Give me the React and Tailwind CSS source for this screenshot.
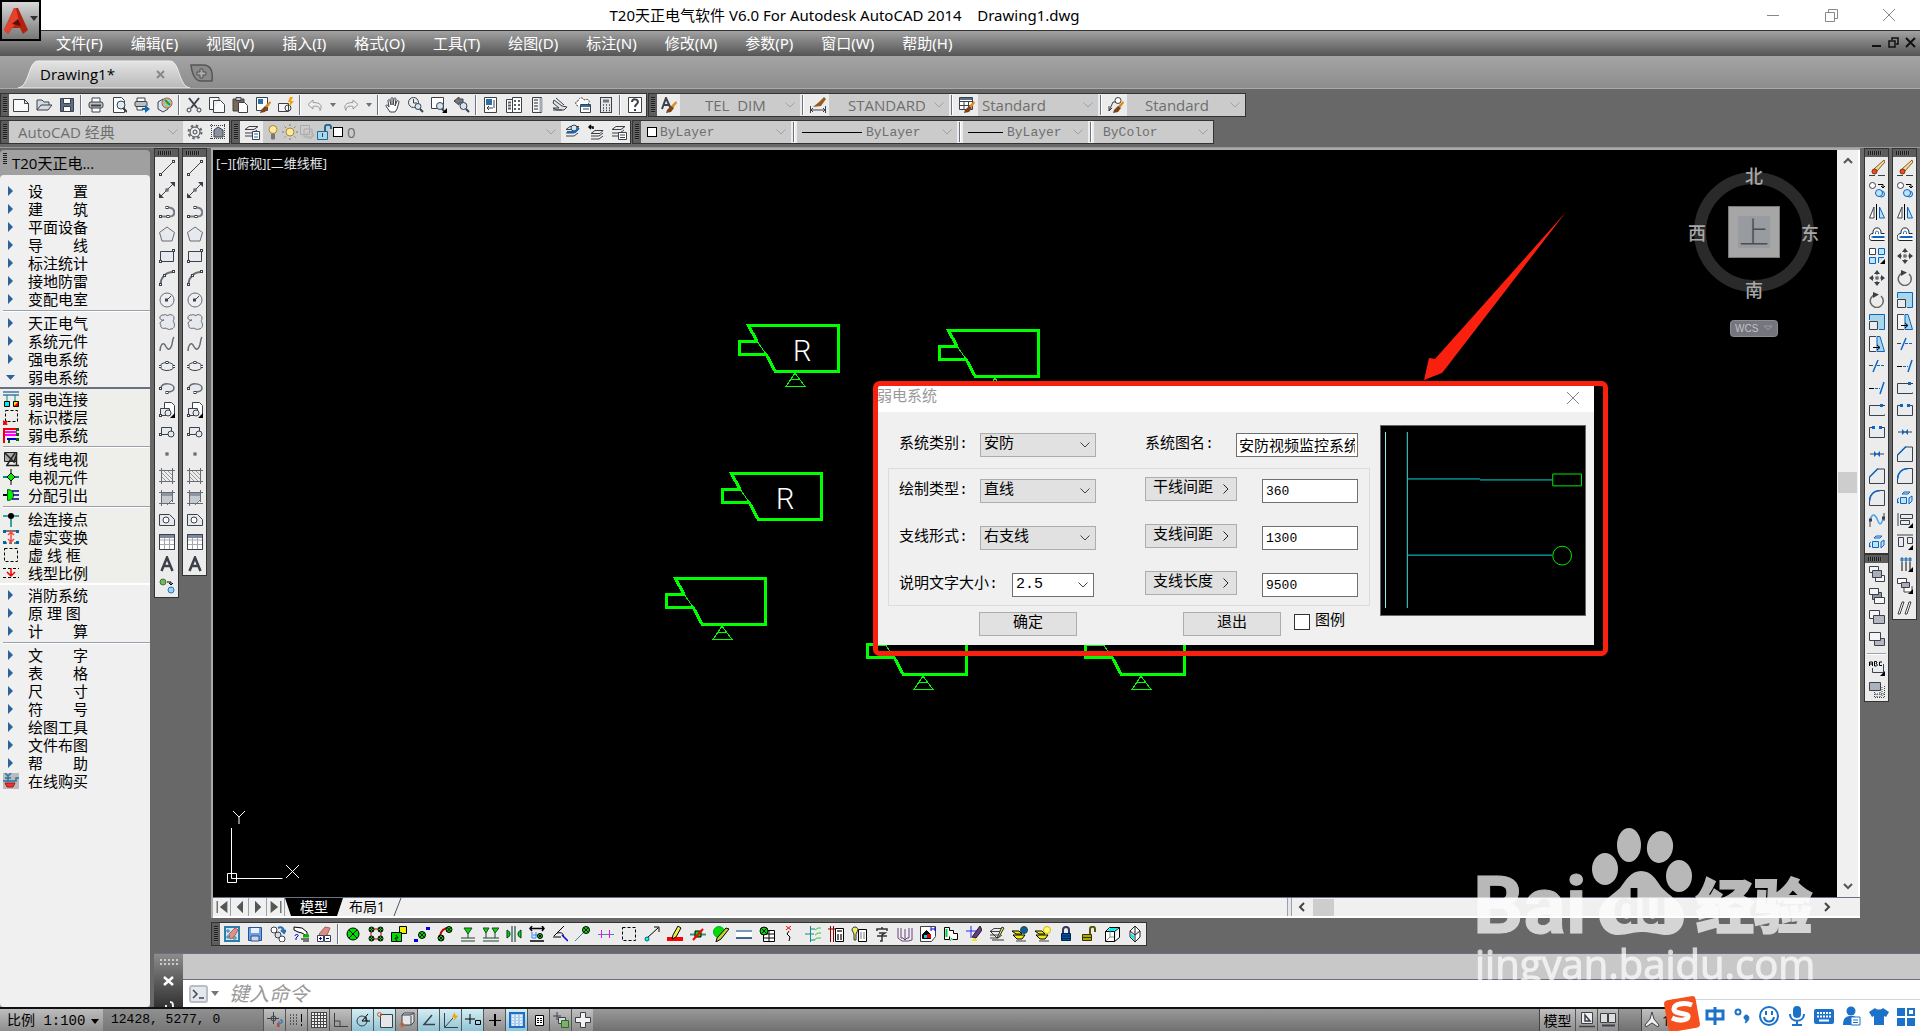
import React, { useState } from "react";

// 16x16 toolbar glyphs
const node = (x, y) => (
  <rect x={x} y={y} width="2" height="2" fill="#fff" stroke="#3c4049" key={`${x}-${y}`} />
);
const corner = <path d="M16 11v5h-5z" fill="#000" stroke="none" />;
const lamp = (x, y, r) => (
  <g stroke="#000">
    <circle cx={x} cy={y} r={r} fill="#0d0" />
    <path d={`M${x - r * 0.7} ${y - r * 0.7}l${r * 1.4} ${r * 1.4}m0 ${-r * 1.4}l${-r * 1.4} ${r * 1.4}`} />
  </g>
);
const brush = (
  <g stroke="none">
    <path d="M15 4l1 2-4 5-2-2z" fill="#e08a1a" />
    <path d="M10 9l3 2-3 4-5 1 1-3z" fill="#7b431a" />
  </g>
);
const page = <path d="M2.500.5h8l3 3v12h-11z" fill="#fff" />;
const stack = <path d="M5 2.500h9l-4 3H1zM1 9h8l4-3M1 12h8l4-3" fill="none" />;

const icons = {
  new: <path d="M.5 2.500h11l4 4v8H.5zM11.500 2.500v4h4" fill="#fafafa" />,
  open: <path d="M1 13V3h5l2 2h5v3M1 13l4-5h11l-4 5z" fill="#d5dbe2" />,
  save: (
    <>
      <path d="M1.500 1.500h13v13h-13z" fill="#5b6f8c" />
      <path d="M4.500 1.500h7v5h-7zM4.500 9.500h7v5h-7z" fill="#fff" />
    </>
  ),
  print: (
    <>
      <path d="M4 5V1h8v4M4 11v4h8v-4" fill="#fff" />
      <rect x="1" y="5" width="14" height="6" rx="2" fill="#b9bec5" />
      <path d="M3 8.500h10" strokeWidth="2" />
    </>
  ),
  preview: (
    <>
      {page}
      <circle cx="10" cy="8" r="4" fill="#d9ecf7" />
      <path d="M12 11l4 4" strokeWidth="2" />
    </>
  ),
  publish: (
    <>
      <path d="M3 5V1h8v4M3 9v4h6" fill="#fff" />
      <rect x="1" y="4.500" width="12" height="5" rx="1" fill="#b9bec5" />
      <path d="M8 11h3V8l5 4-5 4v-3H8z" fill="#1268b5" stroke="none" />
    </>
  ),
  cube3d: (
    <>
      <path d="M1 5l5-3 5 3v7l-5 3-5-3z" fill="#dce6ef" />
      <circle cx="10" cy="6" r="5" fill="#7fd0e8" stroke="#d83b1d" />
      <path d="M5 6h10M10 1v10" stroke="#e3b400" />
      <path d="M8 3l5 5" stroke="#1a9a48" strokeWidth="2" />
    </>
  ),
  cut: (
    <>
      <path d="M3 1l8 10M13 1L5 11" strokeWidth="2" />
      <circle cx="3" cy="13" r="2" />
      <circle cx="13" cy="13" r="2" />
    </>
  ),
  copyclip: <path d="M10 4V.5H.5v12H4M4.500 3.500h7l4 4v8h-11z" fill="#fafafa" />,
  paste: (
    <>
      <path d="M1 2h11v12H1z" fill="#7a6a50" />
      <path d="M4 .5h5v3H4z" fill="#ccc" />
      <path d="M6.500 5.500h6l3 3v7h-9z" fill="#fff" />
    </>
  ),
  match: (
    <>
      <path d="M1.500.5h11v13h-11z" fill="#fff" />
      <path d="M3 2h5v5H3z" fill="#2d6fa8" stroke="none" />
      {brush}
    </>
  ),
  blockedit: (
    <>
      <path d="M.5 6.500h10v8H.5z" fill="#f4f4f4" />
      <circle cx="10" cy="11" r="3" />
      <path d="M12 0l-2 5h2l-1 5 5-6h-3l2-4z" fill="#f5a10a" stroke="none" />
    </>
  ),
  undo: <path d="M6 3L1 7.500 6 12V9.500c4-1 7 0 7 4 3-5 0-8-7-8z" fill="#eee" stroke="#999" />,
  redo: <path d="M10 3l5 4.500L10 12V9.500c-4-1-7 0-7 4-3-5 0-8 7-8z" fill="#eee" stroke="#999" />,
  pan: (
    <path
      d="M5 15L1 9c0-2 2-1 3 1L3 4c0-2 2-2 2 0l1 4V2c0-2 2-2 2 0v6l1-6c0-2 2-1 2 0l-1 7 2-5c1-1 2 0 2 1l-2 7-2 3z"
      fill="#fff"
    />
  ),
  zoomrt: (
    <>
      <circle cx="5.500" cy="5.500" r="5" fill="#e8eef3" />
      <path d="M5.500 2v4H9" />
      <circle cx="10" cy="9.500" r="3" fill="#cfe6f5" />
      <path d="M12 12l3 3" strokeWidth="2" />
    </>
  ),
  zoomwin: (
    <>
      <path d="M.5.5h12v11H.5z" fill="#fff" />
      <circle cx="9" cy="9" r="3.500" fill="#cfe6f5" />
      <path d="M11 12l3 3" strokeWidth="2" />
      {corner}
    </>
  ),
  zoomprev: (
    <>
      <path d="M5 0L0 4l5 4V6h4V2H5z" fill="#777" />
      <circle cx="9.500" cy="9" r="3.500" fill="#cfe6f5" />
      <path d="M12 12l3 3" strokeWidth="2" />
    </>
  ),
  props: (
    <>
      <path d="M1.500.5h12v15h-12z" fill="#fff" />
      <path d="M3 2h6v6H3z" fill="#2d6fa8" stroke="none" />
      <path d="M11 3v8M4 11h6M4 11l2-2M4 11l2 2" />
    </>
  ),
  dcenter: (
    <>
      <path d="M.5 2.500h6v13h-6zM6.500.5h9v15h-9z" fill="#fff" />
      <path d="M2 5.500h3M2 8.500h3M2 11.500h3M8 4h2M12 4h2M8 8h2M12 8h2M8 12h2M12 12h2" stroke="#5a606b" strokeWidth="2" />
    </>
  ),
  palette: (
    <>
      <path d="M3.500.5h9v15h-9z" fill="#f4f4f4" />
      <path d="M12 1v14" stroke="#a5aab0" strokeWidth="3" />
      <path d="M5 3h4M5 6h4M5 9h4M5 12h4" stroke="#8a8f96" strokeWidth="2" />
    </>
  ),
  sheets: <path d="M2 3l8 6 5 1-3 3H5l-4-2h6L1 6zM4 1l8 7M1 13h9" fill="#dfe3e8" />,
  markup: (
    <>
      <path d="M3 9c-3-1-3-5 0-5 1-4 5-4 6-1 4-2 7 1 4 4" fill="#fff" strokeDasharray="2 1" />
      <path d="M5.500 7.500h10v8h-10z" fill="#fff" />
      <path d="M6 9h9" stroke="#2d6fa8" strokeWidth="2" />
      <path d="M8 12h6" />
    </>
  ),
  calc: (
    <>
      <rect x="2.500" y=".5" width="11" height="15" fill="#e4e6e8" />
      <path d="M5 4h6" stroke="#6f7782" strokeWidth="3" />
      <path d="M5 8h1m2 0h1m2 0h1M5 11h1m2 0h1m2 0h1M5 13.500h1m2 0h1m2 0h1" strokeWidth="1.500" />
    </>
  ),
  help: (
    <>
      <path d="M1.500.5h13v15h-13z" fill="#fff" />
      <path d="M5 5c0-4 6-3 6 0 0 2-3 2-3 5M8 12v2" strokeWidth="2" />
    </>
  ),
  textstyle: (
    <>
      <path d="M1 12L5 1l5 11M2.500 8h6" strokeWidth="2" />
      {brush}
    </>
  ),
  dimstyle: (
    <>
      <path d="M.5 9v7M15.500 9v7M1 13h14M3 11l-2 2 2 2M13 11l2 2-2 2" />
      <path d="M14 0l2 2-5 7-8 1 6-5z" fill="#9a5a22" stroke="none" />
    </>
  ),
  tablestyle: (
    <>
      <path d="M.5.5h13v12H.5zM.5 4.500h13M.5 8.500h13M5 4v8M9.500 4v8" fill="#fff" />
      <path d="M1 2h12" stroke="#5b6f8c" strokeWidth="2" />
      {brush}
    </>
  ),
  leaderstyle: (
    <>
      <circle cx="10" cy="3.500" r="3" fill="#fff" />
      <path d="M8 5H5L1 14M1 14V9M1 14l3-3" />
      {brush}
    </>
  ),
  gear: (
    <>
      <circle cx="8" cy="8" r="6.500" stroke="#666b74" strokeWidth="2" strokeDasharray="2.500 2.600" />
      <circle cx="8" cy="8" r="5" fill="#eee" />
      <circle cx="8" cy="8" r="2" />
    </>
  ),
  wssave: (
    <>
      <path d="M1.500 0v16M14.500 0v16M0 1.500h16M0 14.500h16" strokeDasharray="1 1" />
      <path d="M4 13V6l4-3 5 3v7z" fill="#8a929e" />
    </>
  ),
  layers: (
    <>
      {stack}
      <path d="M8.500 7.500h7v8h-7z" fill="#fff" />
      <path d="M10 10h4M10 13h4" stroke="#1268b5" />
    </>
  ),
  bulb: (
    <>
      <circle cx="8" cy="5.500" r="4" fill="#ffe9a0" stroke="#a98b2c" />
      <path d="M6.500 10h3v5h-3z" fill="#777" stroke="#777" />
    </>
  ),
  sun: (
    <>
      <path d="M8 0v16M0 8h16M2.500 2.500l11 11M13.500 2.500l-11 11" stroke="#8a7a4a" strokeDasharray="2 12 2 0" />
      <circle cx="8" cy="8" r="4" fill="#ffe9a0" stroke="#a98b2c" />
    </>
  ),
  vpfreeze: (
    <>
      <path d="M1.500 1.500h9v9h-9zM5 5h8v8H5z" stroke="#aaa" fill="#ccc" />
      <circle cx="11" cy="11" r="3.500" stroke="#aaa" strokeDasharray="2 1" />
    </>
  ),
  unlock: (
    <>
      <path d="M9 7V3c0-3 6-3 6 0v2" strokeWidth="2" stroke="#1f6a94" />
      <path d="M1.500 7.500h10v8h-10z" fill="#a8d8ee" stroke="#1f6a94" />
      <path d="M6.500 9v4" />
    </>
  ),
  laymake: (
    <>
      {stack}
      <circle cx="9" cy="4" r="3" fill="#d5e8f5" />
      <path d="M2 8h8l4-4" stroke="#1268b5" strokeWidth="2" />
    </>
  ),
  layprev: (
    <>
      <path d="M7 6.500h8l-3 3H3zM3 12h8l4-3M3 15h8l4-3" />
      <path d="M1 3h4v2M3 1L1 3l2 2" stroke="#000" strokeWidth="1.500" />
    </>
  ),
  laystate: (
    <>
      {stack}
      <path d="M7.500 8.500h8v7h-8z" fill="#fff" />
      <path d="M9 11h5M9 13.500h5" />
    </>
  ),
  // draw toolbar
  line: <>{<path d="M2 14L14 2" />}{node(0.5, 13.5)}{node(13.5, 0.5)}</>,
  xline: (
    <>
      <path d="M2 14L14 2" />
      <path d="M16 0v5l-5-5zM0 16v-5l5 5z" fill="#3c4049" stroke="none" />
      {node(7, 7)}
    </>
  ),
  pline: <>{<path d="M2 12.500h8c7 0 7-8 0-9H8" strokeWidth="2" stroke="#777d88" />}{node(0.5, 11.5)}{node(8, 11.5)}{node(7, 2.5)}</>,
  polygon: <path d="M8 1l7.500 5.500L13 15H3L.5 6.500z" fill="#e6e9ee" stroke="#666b74" />,
  rectangle: <>{<path d="M1.500 3.500h13v10h-13z" fill="#e6e9ee" />}{node(0.5, 12.5)}{node(13.5, 1.5)}</>,
  arc: <>{<path d="M1.500 14C2 7 7 2 14 2" strokeWidth="2" stroke="#666b74" />}{node(0.5, 13.5)}{node(4.5, 4.5)}{node(13.5, 0.5)}</>,
  circle: (
    <>
      <circle cx="8" cy="8" r="7" fill="#eceef1" stroke="#666b74" />
      <path d="M8 8l4-4" />
      {node(6.5, 7)}
    </>
  ),
  revcloud: (
    <path
      d="M5 6C-1 7 0 0 5 1c2-1 3 0 3 1 2-2 7-2 7 2 0 2-1 3-1 3 3 4 1 8-2 8-2 1-4 0-5-1-3 1-6 0-5-3-2-1-1-4 3-5z"
      fill="#e6e9ee"
      stroke="#666b74"
    />
  ),
  spline: <path d="M1 15c0-6 3-9 5-6 2 4 4 6 6 2 2-3 1-8 3-10" stroke="#666b74" strokeWidth="1.500" />,
  ellipse: <>{<ellipse cx="8" cy="8.500" rx="7" ry="4" fill="#eceef1" />}{node(0, 7.5)}{node(7, 3.5)}{node(14, 7.5)}</>,
  ellarc: <>{<path d="M2 8C2 2 15 3 15 8c0 3-4 4-7 4" fill="#e6e9ee" stroke="#666b74" strokeWidth="1.500" />}{node(0.5, 7.5)}{node(7, 11.5)}</>,
  insert: (
    <>
      <path d="M5.500 7V.5h7l3 3v9" fill="#fff" />
      <path d="M1.500 6.500h9v7h-9z" fill="#e6e9ee" />
      <circle cx="9" cy="11" r="3" fill="#e6e9ee" />
      {corner}
      {node(0.5, 12.5)}
    </>
  ),
  block: (
    <>
      <path d="M2.500 3.500h10v7h-10z" fill="#e6e9ee" />
      <circle cx="12" cy="10" r="3" fill="#e6e9ee" />
      {node(0.5, 9.5)}
    </>
  ),
  point: node(7, 7),
  hatch: (
    <>
      <path d="M0 2.500h16M0 13.500h16M2.500 0v16M13.500 0v16" stroke="#666b74" />
      <path d="M3 5l8 8M3 9l4 4M5 3l8 8M9 3l4 4" stroke="#999" />
    </>
  ),
  gradient: (
    <>
      <path d="M3 3h10v6l-4 4H3z" fill="#c5cad1" stroke="none" />
      <path d="M3 3h10v3H3z" fill="#8f96a1" stroke="none" />
      <path d="M0 2.500h16M0 13.500h16M2.500 0v16M13.500 0v12M8 15l6-6" stroke="#666b74" />
    </>
  ),
  region: (
    <>
      <path d="M.5 2.500h10l5 5v6H.5z" fill="#e6e9ee" />
      <circle cx="7" cy="8" r="3" fill="#fff" />
    </>
  ),
  table: (
    <>
      <path d="M.5.5h15v15H.5z" fill="#fff" />
      <path d="M1 6h14M1 10.500h14M5.500 4v11M10.500 4v11" stroke="#a5aab2" />
      <path d="M1 2.500h14" stroke="#7d88a0" strokeWidth="3" />
      <path d="M.5.5h15v15H.5z" />
    </>
  ),
  mtext: <path d="M2.500 15L8 1.500 13.500 15M4.500 10h7" strokeWidth="2.500" />,
  addsel: (
    <>
      <circle cx="4" cy="4" r="3" fill="#7fb069" stroke="#3a7a2a" />
      <circle cx="12" cy="12" r="3" fill="#9fd0f5" stroke="#1f77c0" />
      <path d="M8 4h4v3M10 5l2 2 2-2" stroke="#000" />
    </>
  ),
  // modify toolbar
  erase: (
    <>
      <path d="M15 0l1 2-8 9-3-2z" fill="#f0d9a0" stroke="#8a5a1a" />
      <circle cx="5.500" cy="11.500" r="2.500" fill="#e2521f" stroke="#8a2a0a" />
      <path d="M0 15.500h6M9 15.500h7" />
    </>
  ),
  copy: (
    <>
      <circle cx="3.500" cy="3.500" r="3" fill="#fff" />
      <circle cx="12.500" cy="12" r="3" fill="#bfe3f8" stroke="#0a66c2" />
      <circle cx="10" cy="11" r="3.500" fill="#bfe3f8" stroke="#0a66c2" />
      <path d="M9 2.500h5v3M12 4l2 2 2-2" stroke="#000" />
    </>
  ),
  mirror: (
    <>
      <path d="M7.500 0v16" stroke="#000" />
      <path d="M5 3v11H.5z" fill="#fff" />
      <path d="M10.500 3v11h5z" fill="#bfe3f8" stroke="#0a66c2" />
    </>
  ),
  offset: (
    <>
      <path d="M15.500 14.500H3c-4 0-4-7 1-7C3 0 13 0 12 7.500h3.500" fill="#fff" stroke="#222" />
      <path d="M15.500 10.500H4c-2 0-2 1 0 1h11.500M6.500 8C6 4 10 4 9.500 8" stroke="#0a66c2" />
    </>
  ),
  array: (
    <>
      <path d="M.5.5h6v6h-6z" fill="#fff" />
      <path d="M9.500.5h6v6h-6zM.5 9.500h6v6h-6zM9.500 15V9.500H15" fill="#bfe3f8" stroke="#0a66c2" />
      {corner}
    </>
  ),
  move: (
    <>
      <path d="M8 0l3 4H5zM8 16l3-4H5zM0 8l4-3v6zM16 8l-4-3v6z" fill="#3c4049" stroke="none" />
      <path d="M8 3v2M8 11v2M3 8h2M11 8h2" />
      {node(7, 7)}
    </>
  ),
  rotate: (
    <>
      <path d="M7 2.500A6.500 6.500 0 1 0 12 4" strokeWidth="1.500" stroke="#666" />
      <path d="M4 0l6 2.500L4 6z" fill="#3c4049" stroke="none" />
    </>
  ),
  scale: (
    <>
      <path d="M.5 6V.5h15v15H10" fill="#a9d7ea" stroke="#0a66c2" />
      <path d="M.5 7.500h8v8h-8z" fill="#e9ecef" />
    </>
  ),
  stretch: (
    <>
      <path d="M7 .5H.5v15H7" fill="#f4f4f4" />
      <path d="M8 .5h3l4.500 15H8z" fill="#a9d7ea" stroke="#0a66c2" />
      <path d="M4 11.500h6M8 9l3 2.500L8 14" stroke="#000" />
    </>
  ),
  trim: (
    <>
      <path d="M9 2L4 14" stroke="#0a66c2" strokeWidth="1.500" />
      <path d="M0 7.500h4" />
      <path d="M8 7.500h8" stroke="#0a66c2" strokeDasharray="3 1" />
    </>
  ),
  extend: (
    <>
      <path d="M15 2l-4 12" stroke="#0a66c2" strokeWidth="1.500" />
      <path d="M0 8.500h5" stroke="#000" />
      <path d="M6 8.500h5" stroke="#0a66c2" strokeDasharray="3 1" />
    </>
  ),
  breakpt: (
    <>
      <path d="M16 3.500H.5v10h15v-1" fill="#e9ecef" />
      <path d="M11 2h3v3h-3z" fill="#0a66c2" stroke="none" />
    </>
  ),
  break: (
    <>
      <path d="M3 3.500H.5v10h15v-10H13" fill="#e9ecef" />
      <path d="M3 2h3v3H3zM10 2h3v3h-3z" fill="#0a66c2" stroke="none" />
    </>
  ),
  join: (
    <>
      <path d="M1 8h14" />
      <path d="M5 5l3 3-3 3zM11 5L8 8l3 3z" fill="#0a66c2" stroke="none" />
    </>
  ),
  chamfer: (
    <>
      <path d="M1 9l8-8h6.500v14.500H.5V9" fill="#e9ecef" />
      <path d="M.5 9L9 .5" stroke="#0a66c2" strokeWidth="1.500" />
    </>
  ),
  fillet: (
    <>
      <path d="M.5 12C.5 5 4 .5 12 .5h3.500v15H.5z" fill="#e9ecef" />
      <path d="M.5 11C1 5 4 1 11 .5" stroke="#0a66c2" strokeWidth="1.500" />
    </>
  ),
  blend: (
    <>
      <path d="M1 8C4-1 7 4 9 9s4 3 5-3" stroke="#4aa3f0" strokeWidth="1.500" />
      <path d="M1 15V8M15 1v8" />
      {node(0.5, 7)}
      {node(13.5, 5)}
    </>
  ),
  explode: (
    <g stroke="#0a66c2">
      <path d="M3.500 7.500h6v6h-6z" fill="#bfe3f8" />
      <path d="M5 4l2-2h6l-2 2zM12 8l3-2v5l-3 3zM2 8L.5 9v4L2 12" fill="#bfe3f8" />
    </g>
  ),
  alignleft: <>{<path d="M1 1v13M3.500 2.500h12v4h-12zM3.500 8.500h9v4h-9z" fill="#e9ecef" />}{corner}</>,
  aligntop: <>{<path d="M0 1h16M1.500 3.500h5v9h-5zM10.500 3.500h5v6h-5z" fill="#e9ecef" />}{corner}</>,
  counters: (
    <>
      <path d="M5 6v9M9 6v9M13 6v9" strokeWidth="1.500" stroke="#555" />
      <path d="M4 2h2v3H4zM8 2h2v3H8zM12 2h2v3h-2z" fill="#5f92c4" stroke="#2d6fa8" />
      {corner}
    </>
  ),
  groups: <>{<path d="M.5.5h9v5h-9zM7 9v5h8V8" fill="#fff" />}<path d="M4.500 4.500h8v5h-8z" fill="#aab" />{corner}</>,
  slashes: <path d="M5 2h2L3 14H1zM12 2h2l-4 12H8z" fill="#fff" />,
  front: <>{<path d="M.5.5h9v6h-9zM6.500 9.500h9v6h-9z" fill="#f4f5f8" />}<path d="M3.500 4.500h9v7h-9z" fill="#a9adb8" /></>,
  back: <>{<path d="M3.500 4.500h9v7h-9z" fill="#8e949f" />}<path d="M.5.5h9v6h-9zM5.500 9.500h10v6h-10z" fill="#f4f5f8" /></>,
  above: <>{<path d="M.5.5h10v8H.5z" fill="#f4f5f8" />}<path d="M4.500 5.500h11v8h-11z" fill="#b5b8c0" /></>,
  under: <>{<path d="M5.500 6.500h10v7h-10z" fill="#b5b8c0" />}<path d="M.5.5h11v8H.5z" fill="#f4f5f8" /></>,
  abc: (
    <>
      <path d="M3.500 8v4.500h11V4" fill="#e9ecef" />
      <path d="M.5 6V2h3v4M1 4h2M5.500 6V1.500h2L8 3l-1 .5L8.500 5l-1 1zM13 2h-2.500v3.500H13" stroke="#000" />
      {corner}
    </>
  ),
  hatchback: <>{<path d="M.5.5h11v8H.5z" fill="#a9b2bd" />}<path d="M5.500 10v5.500h10V4M8 15v-3M11 15V9M6 12h9M13 5v10" strokeDasharray="1 1" /></>,
  // bottom electrical toolbar
  panelset: (
    <>
      <path d="M1 1h14v14H1z" fill="#cfe8f5" stroke="#2d7fa8" strokeWidth="2" />
      <path d="M3 4h2v2H3zM3 10h2v2H3zM9 11h3v2H9z" stroke="#2d7fa8" />
      <path d="M5 8l6-6 3 2-4 7-4 2z" fill="#e0908a" stroke="#a8605a" />
    </>
  ),
  disk: (
    <>
      <path d="M1.500 1.500h13v13h-13z" fill="#6f9fe0" stroke="#2a4f9a" />
      <path d="M4 2h8v5H4z" fill="#e6f0ff" stroke="none" />
      <path d="M4 10h8v5H4z" fill="#d0d8e0" stroke="#2a4f9a" />
    </>
  ),
  swap: (
    <>
      <circle cx="4" cy="4" r="3" fill="#fff" />
      <circle cx="8" cy="9" r="3" fill="#ddd" />
      <circle cx="12" cy="13" r="3" fill="#fff" />
      <path d="M8 2c4-2 6 1 6 4M11 4l3 3 2-3" stroke="#2a6fb0" strokeWidth="2" />
    </>
  ),
  handask: (
    <>
      <path d="M1 1l8 1 5 4v4l-5-3-4-1-4-2z" fill="#fff" stroke="#000" />
      <path d="M2 10c0-2 4-2 3 0l-2 2v2" stroke="#00c" />
      <path d="M10 10h6" stroke="#0b0" strokeWidth="3" />
      <path d="M8 13h8M10 15h6" stroke="#000" />
    </>
  ),
  eraser2: (
    <>
      <path d="M3 8l6-7 5 1-3 7-6 2z" fill="#d98f86" stroke="#a8605a" />
      <path d="M1.500 9.500h6v6h-6zM8.500 9.500h6v6h-6z" fill="#fff" />
      <path d="M3 12.500h3M4.500 11v3M10 12.500h3" stroke="#00c" />
    </>
  ),
  lamp1: lamp(8, 8, 6),
  lamp4: <>{<path d="M3 3h10v10H3z" stroke="#c00" />}{lamp(3.5, 3.5, 2.5)}{lamp(12.5, 3.5, 2.5)}{lamp(3.5, 12.5, 2.5)}{lamp(12.5, 12.5, 2.5)}</>,
  swaplamp: <><path d="M8.500.5h7v7h-7z" fill="#ee0" stroke="#000" /><path d="M.5 6.500h10v9H.5z" fill="#0d0" stroke="#000" /><path d="M5 9l2 3H4l2 3" stroke="#000" /></>,
  lampline: <>{lamp(8, 9, 3.5)}<path d="M0 13h4v3H0zM12 1h4v3h-4z" fill="#00d" stroke="none" /></>,
  lamparc: <><path d="M3 10c1-6 5-8 9-8" stroke="#c00" strokeWidth="2" />{lamp(4, 12, 3)}{lamp(12, 3.5, 3)}</>,
  wall1: <path d="M4 2h8L8 8zM8 8v4M1 12h14M1 15h14" fill="#0d0" stroke="#243" />,
  wall2: <path d="M0 2h6L3 7zM9 2h7l-4 5zM3 7v5M12 7v5M0 12h16M0 15h16" fill="#0d0" stroke="#243" />,
  doublewall: <path d="M6 0v16M9 0v16M1 4c4 2 4 6 0 8zM15 4c-4 2-4 6 0 8z" fill="#0d0" stroke="#032" />,
  equip: (
    <>
      <path d="M1 2.500h14M3 0L1 2.500 3 5M13 0l2 2.500L13 5M1 15h14" stroke="#000" strokeWidth="1.500" />
      <path d="M3 6v6h4V6M4 9h6" stroke="#28f" />
      {lamp(11, 10, 2.5)}
    </>
  ),
  switch: (
    <>
      <path d="M2 10L12 0M5 7c5-1 7 1 6 3M1 11h8" stroke="#000" />
      <path d="M10 9l6 6" stroke="#00d" strokeWidth="1.500" />
    </>
  ),
  lampstick: <><path d="M0 15l8-8" stroke="#488" />{lamp(11, 4, 3.5)}</>,
  wire: <><path d="M0 8.500h16" stroke="#48a" /><path d="M3.500 4v8M11.500 4v8" stroke="#f0f" /></>,
  dashbox: <path d="M1.500 1.500h13v13h-13z" strokeDasharray="3 2" stroke="#000" />,
  wirepoint: <><path d="M3 12L14 2M10 1h5v5" stroke="#000" /><circle cx="3" cy="13" r="2" fill="#0ff" stroke="#066" /></>,
  pencilred: (
    <>
      <path d="M0 11h16v4H0z" fill="#f00" stroke="none" />
      <path d="M11 0l3 2-5 9-4 2 1-4z" fill="#ee4" stroke="#000" />
    </>
  ),
  cutwire: <><path d="M0 8.500h16" stroke="#488" strokeWidth="2" /><path d="M5 5h6v6H5z" fill="#0d0" stroke="#000" /><path d="M3 14L13 3" stroke="#f00" strokeWidth="2" /></>,
  lampedit: <><circle cx="6" cy="6" r="5.500" fill="#0d0" stroke="#0a4" /><path d="M13 2l3 1-8 10-5 3 1-4z" fill="#cc3" stroke="#000" /></>,
  bars: <><path d="M0 8.500h16" stroke="#fff" strokeWidth="5" /><path d="M0 5h16" stroke="#79b" strokeWidth="2" /><path d="M0 12h16" stroke="#468" strokeWidth="2" /></>,
  lamptable: <><path d="M4.500 4.500h11v11h-11zM4 8h12M4 12h12M10 5v10" fill="#fff" stroke="#000" />{lamp(5, 5, 4)}</>,
  spark: <><path d="M4 0l5 4M9 0L4 4" stroke="#f00" /><path d="M7 5L5 8l3 3-1 4" stroke="#000" /></>,
  branches: <><path d="M5.500 0v16M0 8h9M5 3h5M5 14h5" stroke="#188" /><path d="M10 4l3-2h3M10 9l3-2h3M9 14l3-2h4" stroke="#3c3" /></>,
  busbar: <><path d="M0 3h8M2.500 0v16M5.500 0v16" stroke="#800" /><path d="M7.500 2.500h8v13h-8z" fill="#fff" stroke="#000" /><path d="M9 5h5M10 8v6M13 8v6" stroke="#333" strokeWidth="1.500" /></>,
  bulbpanel: <><path d="M1 4c0-4 6-4 6 0L5 8v6H3V8z" fill="#ee6" stroke="#333" /><path d="M7.500 3.500h8v12h-8z" fill="#fff" stroke="#000" /><path d="M10 6v7M13 6v7" stroke="#777" /></>,
  word: <path d="M3 5V3h10v2M8 1v2M5 7h6L8 9v6H6M3 10h10" stroke="#333" strokeWidth="1.500" />,
  book: <path d="M1 2v10l4 3h6l4-1V2M4 2v10h2l2 2 2-2h2V2M8 3v10" fill="#eee" stroke="#647" />,
  shapes: (
    <>
      <path d="M.5.5h15v10l-4 5H.5z" fill="#fff" />
      <path d="M2.500 8.500l4-4 4 4v4h-8z" fill="#000" stroke="#000" />
      <path d="M7 8h4v4H7z" fill="#d00" stroke="none" />
      <path d="M4 9h3v3H4z" fill="#0cf" stroke="none" />
      <path d="M11 1v4M15 1v4M11 3h4" stroke="#00d" />
    </>
  ),
  outline: <><path d="M1.500 1.500h5v3h4v3h4v6h-5M1.500 1.500v12h5v-3" fill="#fff" stroke="#000" /><path d="M3.500 3v8" stroke="#0c3" strokeWidth="2" /><path d="M7 15l2-3" stroke="#0c3" /></>,
  crosspen: <><path d="M0 5h12M5 0v12" stroke="#22f" /><path d="M14 0l2 4-6 8-4-1z" fill="#6a3a8a" stroke="#222" /><path d="M6 14h5" stroke="#ee0" strokeWidth="2" /></>,
  layerpen: <><g>{stack}</g><path d="M1 5l7 7M3 14h12" stroke="#333" /><path d="M13 1l2 1-5 9-2 1z" fill="#ee4" stroke="#333" /></>,
  layeroff: <><path d="M0 5h7l3 3H4zM1 9h12l-3 4H5z" fill="#ee0" stroke="#000" /><circle cx="12" cy="4" r="3.500" fill="#069" /><path d="M4 15h10" /></>,
  layeron: <><path d="M0 5h7l3 3H4zM1 9h12l-3 4H5z" fill="#ee0" stroke="#000" /><circle cx="12" cy="4" r="3.500" fill="#ff6" stroke="#cb0" /><path d="M4 15h10" /></>,
  lock: <><path d="M5 7V4c0-4 6-4 6 0v3" stroke="#336" strokeWidth="2" /><path d="M3.500 7.500h9v7h-9z" fill="#05a" stroke="#024" /><path d="M4 10h8M4 12.500h8" stroke="#024" /></>,
  lockopen: <><path d="M9 8V3c0-3 5-3 5 0v3" stroke="#550" strokeWidth="2" /><path d="M1.500 8.500h9v6h-9z" fill="#aa0" stroke="#330" /><path d="M2 11.500h8" stroke="#330" /></>,
  box3d: <><path d="M1.500 5.500h9v10h-9zM1.500 5.500l4-4h10l-5 4M15.500 1.500v10l-5 4" fill="#fff" stroke="#000" /><path d="M3 5l3-3h8l-4 3z" fill="#0ee" stroke="none" /><path d="M2 15l4-4V5M6 11h4" stroke="#888" /></>,
  diamond: <><path d="M8 0l5 5v6l-5 5-5-5V5zM8 0v16M3 5l5 4 5-4" fill="#fff" stroke="#222" /><path d="M4 7l3 3v4l-3-3z" fill="#0ee" stroke="none" /></>,
  // status bar
  infer: <><path d="M0 6.500h12M6.500 0v12" /><circle cx="6.500" cy="6.500" r="2.500" /><path d="M13 8h2v3h-2M12 9v6" stroke="#1268b5" /><path d="M11 15v-4" stroke="#d83b1d" strokeWidth="2" /></>,
  snap: <><path d="M1 3h9M1 6h9M1 9h9M1 12h9" strokeDasharray="1 2" stroke="#000" /><path d="M12.500 2v8M12.500 12v2" stroke="#000" /></>,
  grid: (
    <>
      <path d="M.5.5h15v15H.5z" fill="#eee" />
      <path d="M.5.5h15v15H.5zM3.500 0v16M6.500 0v16M9.500 0v16M12.500 0v16M0 3.500h16M0 6.500h16M0 9.500h16M0 12.500h16" stroke="#444" />
    </>
  ),
  ortho: <path d="M1.500 1v13.500H15M2 9h5v5" />,
  polar: <><circle cx="7" cy="9" r="5" /><path d="M7 9h8M7 9l6-7M11 5v4" stroke="#000" /></>,
  osnap: <><path d="M3.500 2.500h12v13h-12z" fill="#e4e6e8" /><circle cx="2.500" cy="2.500" r="2" stroke="#e8581a" /></>,
  osnap3d: <><path d="M3 3l2-2h10v9l-3 3H3zM12 4v9M3 3h9l3-2" fill="#e4e6e8" /><circle cx="3" cy="13" r="2" stroke="#e8581a" /></>,
  otrack: <path d="M11 3L3 12.500h11" strokeWidth="1.500" />,
  ducs: <><path d="M1.500 1v14.500H15M2 15l8-9" /><path d="M12 0L9 5l3 1-2 4 5-6-3-1z" fill="#f5a10a" stroke="none" /></>,
  dyn: <path d="M0 7h10M5 2v10M10.500 8.500h5v4h-5z" stroke="#000" />,
  lwt: <><path d="M8 2v12" stroke="#000" strokeWidth="2" /><path d="M2 8.500h12" stroke="#000" /></>,
  tpy: <><path d="M1 1h14v14H1z" fill="#a8cdf0" stroke="#1f6fc0" strokeWidth="2" /><path d="M3 4h11M3 7h11M3 10h11M3 13h11" stroke="#e3f0fb" strokeWidth="2" strokeDasharray="2 2" /></>,
  qp: <><path d="M4.500 3.500h8v10h-8z" fill="#fff" stroke="#000" /><path d="M6 6.500h5M6 8.500h5M6 10.500h5" stroke="#000" strokeDasharray="2 1" /></>,
  sc: <><path d="M0 4h8M4 0v8" /><path d="M5.500 5.500h7v6h-7z" fill="#d5dbe2" /><path d="M8.500 8.500h7v7h-7z" fill="#7fb069" stroke="#2d6b2a" /></>,
  annomon: <path d="M5.500.5h5v5h5v5h-5v5h-5v-5h-5v-5h5z" fill="#f2f2f2" />,
  modelpage: <><path d="M2.500.5h11v11h-11z" fill="#eee" /><path d="M6 3v6h5zM0 14.500h16" strokeWidth="1.500" /></>,
  quickview: <><path d="M.5 1.500h7v9h-7zM8.500 1.500h7v9h-7z" fill="#ddd" /><path d="M2 13.500h13" strokeWidth="2" /></>,
  annoscale: <path d="M8 0l2 7 5 6-1 2-6-4-6 4-1-2 5-6z" fill="#eee" />,
};

const Icon = ({ name }) => (
  <svg width="16" height="16" viewBox="0 0 16 16" fill="none" stroke="#3c4049" className="shrink-0">
    {icons[name]}
  </svg>
);

const Chevron = ({ className }) => (
  <svg width="10" height="6" viewBox="0 0 10 6" fill="none" className={className}>
    <path d="M.5.5L5 5 9.500.5" stroke="currentColor" />
  </svg>
);

// "|" separator, ">" small drop arrow, anything else an icon button
const ToolItems = ({ items }) =>
  items.map((item, i) => {
    if (item === "|") return <Sep key={i} />;
    if (item === ">")
      return (
        <span key={i} className="flex w-[13px] justify-center text-gray-500">
          <svg width="6" height="4"><path d="M0 0h6L3 4z" fill="currentColor" /></svg>
        </span>
      );
    return (
      <button key={i} aria-label={item} className="flex h-[22px] w-[23px] items-center justify-center">
        <Icon name={item} />
      </button>
    );
  });

const Grip = () => (
  <span className="flex h-full w-[8px] shrink-0 items-center justify-center bg-[#5c5c5c]">
    <span className="h-4 w-1 bg-[repeating-linear-gradient(#1c1c1c_0_1px,#6c6c6c_1px_2px)]" />
  </span>
);

const Toolbar = ({ children }) => (
  <div className="flex h-6 items-center border border-[#333] bg-[#ececec]">
    <Grip />
    {children}
  </div>
);

const Sep = () => (
  <span className="mx-[2px] h-5 w-[2px] border-l border-r border-l-gray-500 border-r-white" />
);

const BarSelect = ({ label, value, width, pad, lead, mono }) => (
  <div className={`relative flex h-[22px] items-center bg-[#cbcbcb] text-[#6e6e6e] ${width}`}>
    {lead}
    <select
      aria-label={label}
      className={`h-full w-full min-w-0 appearance-none pr-6 ${pad} ${
        mono ? "pt-[2px] font-['Liberation_Mono',monospace] text-[13px]" : "text-[15px]"
      }`}
    >
      <option>{value}</option>
    </select>
    <Chevron className="pointer-events-none absolute right-[5px] text-gray-400" />
  </div>
);

const VToolbar = ({ items }) => (
  <div className="w-[25px] border border-[#333] bg-[#ececec]">
    <div className="flex h-2 items-center bg-[#5c5c5c] px-[3px]">
      <span className="h-1 w-3.5 bg-[repeating-linear-gradient(90deg,#1c1c1c_0_1px,#6c6c6c_1px_2px)]" />
    </div>
    {items.map((item, i) =>
      item === "|" ? (
        <div key={i} className="mx-[2px] my-[2px] h-[2px] border-t border-gray-400 bg-white" />
      ) : (
        <button key={i} aria-label={item} className="flex h-[22px] w-full items-center justify-center">
          <Icon name={item} />
        </button>
      )
    )}
  </div>
);

const drawTools = [
  "line", "xline", "pline", "polygon", "rectangle", "arc", "circle", "revcloud", "spline", "ellipse",
  "ellarc", "insert", "block", "point", "hatch", "gradient", "region", "table", "mtext",
];
const modifyTools = [
  "erase", "copy", "mirror", "offset", "array", "move", "rotate", "scale", "stretch", "trim", "extend",
  "breakpt", "break", "join", "chamfer", "fillet", "blend", "explode",
];
const modifyTools2 = [
  "erase", "copy", "mirror", "offset", "move", "rotate", "scale", "stretch", "trim", "extend", "breakpt",
  "break", "join", "chamfer", "fillet", "explode", "alignleft", "aligntop", "counters", "groups", "slashes",
];

const menus = [
  "文件(F)", "编辑(E)", "视图(V)", "插入(I)", "格式(O)", "工具(T)", "绘图(D)", "标注(N)", "修改(M)",
  "参数(P)", "窗口(W)", "帮助(H)",
];

/* sidebar tree icons */
const sideIcons = {
  link: (
    <>
      <path d="M0 1h16M0 4h16" stroke="#47a" strokeWidth="1.500" />
      <path d="M4 4v6M12 4v6" stroke="#088" />
      <path d="M1.500 10.500h5v5h-5z" fill="#0ee" stroke="#000" />
      <path d="M10.500 10.500h5v5h-5z" fill="#fe0" stroke="#000" />
      <path d="M11 15l4-4v4z" fill="#e00" stroke="none" />
    </>
  ),
  floor: <><path d="M2.500 1.500h12v11h-12z" stroke="#000" strokeDasharray="3 2" /><path d="M0 12l4 4M4 12l-4 4" stroke="#e00" strokeWidth="2" /></>,
  system: <><path d="M1 1v15M1 2h13" stroke="#e00" strokeWidth="2" /><path d="M2 5h12M2 8h12" stroke="#f0f" strokeWidth="2" /><path d="M4 12h10" stroke="#00c" strokeWidth="2" /><path d="M13 1h3v3h-3zM13 6h3v3h-3zM13 11h3v3h-3zM5 13h2v3H5z" fill="#060" stroke="none" /></>,
  tv: <><path d="M1.500 1.500h12v9h-12z" fill="#aaa" stroke="#222" /><path d="M2 2l9 9 3-9M12 2L4 14M3 14.500h13M13.500 1v14" stroke="#222" strokeWidth="1.500" /></>,
  tvpart: <><path d="M0 8h16" stroke="#088" strokeWidth="2" /><path d="M8 0v16" stroke="#000" /><path d="M8 4l4 4-4 4-4-4z" fill="#0e0" stroke="#000" /></>,
  split: <><path d="M0 8h4" stroke="#000" strokeWidth="2" /><path d="M4.500 2.500c8 0 8 11 0 11z" fill="#0e0" stroke="#060" /><path d="M9 4h7M10 8h6M9 12h7" stroke="#008" strokeWidth="1.500" /></>,
  joint: <><path d="M0 5h16M8 5v11" stroke="#088" strokeWidth="1.500" /><circle cx="8" cy="5" r="3" fill="#000" stroke="none" /></>,
  convert: <><path d="M1 2h14" stroke="#000" /><path d="M1 14h14" stroke="#000" strokeDasharray="3 2" /><path d="M8 4v8M5 6l3-3 3 3M5 10l3 3 3-3" stroke="#f44" strokeWidth="1.500" /><path d="M0 1h3v3H0zM13 1h3v3h-3zM0 12h3v3H0zM13 12h3v3h-3z" fill="#06a" stroke="none" /></>,
  dashed: <path d="M1.500 1.500h13v13h-13z" stroke="#000" strokeDasharray="3 2" />,
  ratio: <><path d="M0 3.500h16M0 12.500h16" stroke="#000" strokeDasharray="3 2" /><path d="M8 3v8M4 7l4 4 4-4" stroke="#e00" strokeWidth="1.500" /></>,
  cart: <><path d="M0 0h16v16H0z" fill="#bbb" stroke="none" /><path d="M2 0l3 3 3-3M5 3v6M2 5h6M0 8h13V5h3" stroke="#27a" strokeWidth="1.500" /><path d="M2 10h10l-2 4H4z" fill="#e33" stroke="#a11" /></>,
};

const tree = [
  ["设　　置", "建　　筑", "平面设备", "导　　线", "标注统计", "接地防雷", "变配电室"],
  ["天正电气", "系统元件", "强电系统", "弱电系统"],
];
const subTree = [
  [["link", "弱电连接"], ["floor", "标识楼层"], ["system", "弱电系统"]],
  [["tv", "有线电视"], ["tvpart", "电视元件"], ["split", "分配引出"]],
  [["joint", "绘连接点"], ["convert", "虚实变换"], ["dashed", "虚 线 框"], ["ratio", "线型比例"]],
];
const treeEnd = [
  ["消防系统", "原 理 图", "计　　算"],
  ["文　　字", "表　　格", "尺　　寸", "符　　号", "绘图工具", "文件布图", "帮　　助", "在线购买"],
];

const TreeItem = ({ label, open, icon }) => (
  <li className="h-[18px]">
    <button className="flex h-[18px] w-full items-center pl-[3px] text-[15px] leading-[18px]">
      <span className="flex w-[25px]">
        <svg width="16" height="16" viewBox="0 0 16 16" fill="none" className="text-[#2a6299]">
          {icon ? sideIcons[icon] : <path d={open ? "M3 6h9l-4.500 5z" : "M5 3v10l5-5z"} fill="currentColor" />}
        </svg>
      </span>
      {label}
    </button>
  </li>
);

const TreeGroups = ({ groups, render }) =>
  groups.map((g, i) => (
    <React.Fragment key={i}>
      {i > 0 && <li className="my-[2px] ml-[3px] h-[2px] border-t border-gray-400 bg-white" />}
      {g.map(render)}
    </React.Fragment>
  ));

const Sidebar = () => (
  <aside className="mt-[2px] flex w-[150px] shrink-0 flex-col rounded-t bg-[#a0a0a0]">
    <div className="flex h-[25px] items-center">
      <span className="mt-[3px] ml-[3px] h-3 w-1 self-start bg-[repeating-linear-gradient(#1c1c1c_0_1px,#a0a0a0_1px_2px)]" />
      <h2 className="pl-[5px] text-[15px] leading-6">T20天正电...</h2>
    </div>
    <nav className="min-h-0 flex-1 overflow-hidden rounded bg-[#f0f0f0] pt-[7px]">
      <ul className="pb-px">
        <TreeGroups groups={tree} render={(t) => <TreeItem key={t} label={t} open={t === "弱电系统"} />} />
      </ul>
      <ul className="border-t-2 border-b-2 border-t-gray-500 border-b-white bg-[#eeeeea] py-[1px]">
        <TreeGroups groups={subTree} render={([icon, t]) => <TreeItem key={t} label={t} icon={icon} />} />
      </ul>
      <ul className="pt-px">
        <TreeGroups
          groups={treeEnd}
          render={(t) => <TreeItem key={t} label={t} icon={t === "在线购买" ? "cart" : null} />}
        />
      </ul>
    </nav>
  </aside>
);

const Camera = ({ x, y, stand = true, letter }) => (
  <g transform={`translate(${x} ${y})`} stroke="#0f0" fill="none">
    <g shapeRendering="crispEdges">
      <path d="M10 17L1 1h90v46H28l-9-17H-8V17h18" strokeWidth="3" />
      <path d="M10 17l9 13" />
      {stand && <path d="M38 48.500h20M48 49l-9 13.500h19l-10-13.500M43 55.500h10" />}
    </g>
    {letter && (
      <text x="46" y="37" stroke="none" fill="#fff" className="font-['Roboto',sans-serif] text-[29px] font-light">
        R
      </text>
    )}
  </g>
);

const ViewCube = () => (
  <svg width="140" height="180" viewBox="0 0 140 180" className="absolute top-3 right-[13px] font-['Noto_Sans_CJK_SC',sans-serif]">
    <circle cx="70" cy="70" r="54" fill="none" stroke="#2a2a2a" strokeWidth="12" />
    <rect x="44.500" y="44.500" width="51" height="51" fill="#a6a6a6" stroke="#777" />
    <rect x="54" y="54" width="32" height="32" fill="#989b9f" />
    <text x="70" y="81" textAnchor="middle" className="text-[30px] font-light" fill="#4c4e52">上</text>
    <g fill="#a8a8a8" textAnchor="middle" className="text-[18px] font-medium">
      <text x="70" y="21">北</text>
      <text x="70" y="135">南</text>
      <text x="13" y="78">西</text>
      <text x="126" y="78">东</text>
    </g>
    <rect x="46.500" y="158.500" width="47" height="16" rx="3" fill="#74757d" stroke="#8c8d95" />
    <text x="51" y="170" className="font-['Liberation_Sans',sans-serif] text-[10px]" fill="#c2c2c6">WCS</text>
    <path d="M80 164h8l-4 4z" fill="none" stroke="#9a9aa0" />
  </svg>
);

const DialogSelect = ({ id, options, white, width }) => (
  <div className={`relative flex h-6 items-center ${width}`}>
    <select
      id={id}
      className={`h-full w-full appearance-none border pl-[3px] text-[15px] leading-5 ${
        white ? "border-[#707070] bg-white" : "border-[#adadad] bg-[#e1e1e1]"
      }`}
    >
      {options.map((o) => (
        <option key={o}>{o}</option>
      ))}
    </select>
    <Chevron className="pointer-events-none absolute right-[6px] text-gray-700" />
  </div>
);

const rows = [
  { id: "draw", label: "绘制类型:", options: ["直线"], button: "干线间距", value: "360" },
  { id: "branch", label: "支线形式:", options: ["右支线"], button: "支线间距", value: "1300" },
  { id: "size", label: "说明文字大小:", options: ["2.5"], button: "支线长度", value: "9500", wide: true },
];

const Dialog = () => {
  const [name, setName] = useState("安防视频监控系统图");
  const [legend, setLegend] = useState(false);

  return (
    <section className="absolute top-[234px] left-[664px] w-[717px] bg-[#f0f0f0] font-['Liberation_Mono','Noto_Sans_CJK_SC',monospace] text-[15px] leading-5 text-black">
      <header className="flex h-7 items-center justify-between bg-white pr-[15px] text-[#999]">
        <h2>弱电系统</h2>
        <button aria-label="关闭">
          <svg width="12" height="12" stroke="#888"><path d="M0 0l12 12M12 0L0 12" /></svg>
        </button>
      </header>
      <div className="flex gap-[10px] pr-2 pb-[9px] pl-[11px]">
        <div className="w-[482px] pt-[21px]">
          <div className="flex items-center pl-[11px]">
            <label htmlFor="kind" className="w-[81px]">系统类别:</label>
            <DialogSelect id="kind" options={["安防"]} width="w-[116px]" />
            <label htmlFor="name" className="ml-[49px] w-[91px]">系统图名:</label>
            <input
              id="name"
              value={name}
              onChange={(e) => setName(e.target.value)}
              className="h-6 w-[122px] border border-[#707070] bg-white px-[2px]"
            />
          </div>
          <div className="mt-[11px] flex flex-col gap-[23px] border border-[#dcdcdc] pt-[10px] pr-[11px] pb-[8px] pl-[10px]">
            {rows.map((r) => (
              <div key={r.id} className="flex h-6 items-center">
                <label htmlFor={r.id} className={r.wide ? "w-[113px]" : "w-[81px]"}>
                  {r.label}
                </label>
                <DialogSelect id={r.id} options={r.options} white={r.wide} width={r.wide ? "w-[82px]" : "w-[116px]"} />
                <div className="ml-auto flex items-center gap-[25px]">
                  <button className="mb-1 flex h-6 w-[92px] items-center justify-center gap-[10px] border border-[#adadad] bg-[#e1e1e1]">
                    {r.button}
                    <svg width="6" height="10" fill="none" stroke="#222"><path d="M.5.5L5 5 .5 9.500" /></svg>
                  </button>
                  <input
                    aria-label={r.button}
                    defaultValue={r.value}
                    className="h-6 w-[96px] border border-[#707070] bg-white px-[3px] text-[13px]"
                  />
                </div>
              </div>
            ))}
          </div>
          <div className="mt-[6px] flex items-center pl-[91px]">
            <button className="h-6 w-[98px] border border-[#adadad] bg-[#e1e1e1]">确定</button>
            <button className="ml-[106px] h-6 w-[98px] border border-[#adadad] bg-[#e1e1e1]">退出</button>
            <label className="ml-[13px] flex items-center gap-[5px] self-start">
              <input
                type="checkbox"
                checked={legend}
                onChange={(e) => setLegend(e.target.checked)}
                className="h-4 w-4 appearance-none border border-[#333] bg-white checked:bg-gray-600"
              />
              图例
            </label>
          </div>
        </div>
        <svg width="206" height="191" viewBox="0 0 206 191" fill="none" className="mt-[13px] shrink-0 border border-[#666] bg-black">
          <path d="M4.500 6v178" stroke="#9ee" />
          <path d="M26.500 6v178" stroke="#5dd" />
          <path d="M27 53.500h73M100 54.500h73M27 130.500h146" stroke="#0dd" />
          <path d="M173.500 48.500h29v12h-29z" stroke="#0e0" />
          <circle cx="183" cy="131" r="9.500" stroke="#0e0" />
        </svg>
      </div>
    </section>
  );
};

const Canvas = () => (
  <div className="relative min-w-0 flex-1 overflow-hidden bg-black">
    <p className="absolute top-[3px] left-[3px] text-[13px] leading-5 text-gray-200">[−][俯视][二维线框]</p>
    <svg width="1200" height="560" className="absolute top-0 left-0">
      <Camera x={534} y={174} letter />
      <Camera x={734} y={179} />
      <Camera x={517} y={322} stand={false} letter />
      <Camera x={461} y={427} />
      <Camera x={662} y={477} />
      <Camera x={880} y={477} />
    </svg>
    <svg width="110" height="90" viewBox="0 0 110 90" fill="none" stroke="#fff" className="absolute bottom-[6px] left-0">
      <path d="M20 10l6 6 6-6M26 16v7M18.500 27v50.500h51M14.500 72.500h9v9h-9zM73 64l13 13M86 64L73 77" />
    </svg>
    <ViewCube />
    <Dialog />
    {/* callout frame and arrow */}
    <svg width="760" height="460" fill="none" className="pointer-events-none absolute top-[50px] left-[655px]">
      <rect x="7.500" y="183.500" width="730" height="270" rx="4" stroke="#fa2010" strokeWidth="5" />
      <path d="M698 12L578 168l-4 5-18 7 5-22 6 1z" fill="#fa2010" />
    </svg>
  </div>
);

const NavButton = ({ label, d }) => (
  <button aria-label={label} className="flex w-[18px] items-center justify-center border-r border-gray-400">
    <svg width="12" height="12" viewBox="0 0 10 10" fill="#555" stroke="#555"><path d={d} /></svg>
  </button>
);

const BottomScroll = () => (
  <div className="flex h-[21px] border-t border-b-2 border-t-gray-500 border-b-white bg-[#f0f0f0]">
    <NavButton label="first" d="M1 0v10M9 1v8L4 5z" />
    <NavButton label="previous" d="M7 1v8L3 5z" />
    <NavButton label="next" d="M3 1v8l4-4z" />
    <NavButton label="last" d="M9 0v10M1 1v8l5-4z" />
    <button className="h-[18px] w-[58px] bg-black text-[14px] leading-[18px] text-white [clip-path:polygon(0_0,100%_0,calc(100%-6px)_100%,6px_100%)]">
      模型
    </button>
    <button className="h-[18px] pl-[6px] text-[14px] leading-[18px]">布局1</button>
    <svg width="20" height="18" className="text-gray-600"><path d="M16 0L9 18" stroke="currentColor" /></svg>
    <div className="ml-auto flex w-[573px] items-center">
      <span className="h-full w-[5px] border-r border-l border-gray-400 bg-gray-200" />
      <svg width="21" height="10" fill="none" stroke="#444" strokeWidth="2"><path d="M12 1L8 5l4 4" /></svg>
      <span className="h-[17px] w-[21px] bg-[#cdcdcd]" />
      <svg width="20" height="10" fill="none" stroke="#444" strokeWidth="2" className="mr-[23px] ml-auto">
        <path d="M8 1l4 4-4 4" />
      </svg>
    </div>
  </div>
);

const VScroll = () => (
  <div className="flex w-[23px] shrink-0 flex-col items-center border-r-2 border-r-white bg-[#f0f0f0]">
    <svg width="12" height="8" fill="none" stroke="#555" strokeWidth="2" className="mt-[7px]"><path d="M2 6l4-4 4 4" /></svg>
    <span className="mt-[307px] h-[21px] w-[19px] bg-[#cdcdcd]" />
    <svg width="12" height="8" fill="none" stroke="#555" strokeWidth="2" className="mt-auto mb-[7px]"><path d="M2 2l4 4 4-4" /></svg>
  </div>
);

const statusButtons = [
  ["infer"], ["snap"], ["grid"], ["ortho"], ["polar", 1], ["osnap", 1], ["osnap3d"], ["otrack", 1], ["ducs", 1],
  ["dyn", 1], ["lwt"], ["tpy", 1], ["qp"], ["sc"], ["annomon"],
];

const StatusBar = () => (
  <footer className="flex h-6 border-t-2 border-t-[#111] bg-linear-to-b from-[#999] to-[#707070]">
    <div className="flex w-[103px] items-center bg-linear-to-b from-[#bdbdbd] to-[#8f8f8f] pt-[2px] pl-[7px] font-['Liberation_Mono','Noto_Sans_CJK_SC',monospace] text-[14px]">
      <button className="flex items-center gap-[6px] leading-5">
        比例 1:100
        <svg width="8" height="5"><path d="M0 0h8L4 5z" /></svg>
      </button>
    </div>
    <output className="flex w-[160px] items-center bg-linear-to-b from-[#909090] to-[#777] pl-2 font-['Liberation_Mono',monospace] text-[13px] whitespace-pre">
      12428, 5277, 0
    </output>
    {statusButtons.map(([name, on]) => (
      <button
        key={name}
        aria-label={name}
        aria-pressed={!!on}
        className={`flex w-[22px] items-center justify-center border-l border-l-[#555] bg-linear-to-b ${
          on ? "from-[#d5edf4] to-[#8fc4d6]" : "from-[#c0c0c0] to-[#8e8e8e]"
        }`}
      >
        <Icon name={name} />
      </button>
    ))}
    <div className="ml-auto flex w-[381px]">
      <button className="w-[36px] border-l border-l-[#444] bg-linear-to-b from-[#c0c0c0] to-[#8e8e8e] pt-[2px] text-[14px] leading-5">模型</button>
      <button aria-label="layout" className="flex w-[22px] items-center justify-center border-l border-l-[#555] bg-linear-to-b from-[#c0c0c0] to-[#8e8e8e]"><Icon name="modelpage" /></button>
      <button aria-label="quick view" className="flex w-[22px] items-center justify-center border-x border-x-[#555] bg-linear-to-b from-[#c0c0c0] to-[#8e8e8e]"><Icon name="quickview" /></button>
      <button className="ml-[22px] flex w-[100px] items-center gap-[2px] border-l border-l-[#444] bg-linear-to-b from-[#c0c0c0] to-[#8e8e8e] pl-[2px] text-[14px]">
        <Icon name="annoscale" />1
      </button>
    </div>
  </footer>
);

const ImeBar = () => (
  <div className="absolute right-0 bottom-0 flex h-8 w-[248px] items-center border-t border-t-gray-300 bg-white">
    <svg width="38" height="38" viewBox="0 0 38 38" className="mb-[3px] -ml-[9px] shrink-0">
      <rect x="3" y="3" width="32" height="32" rx="4" fill="#f4511e" transform="rotate(-10 19 19)" />
      <path d="M29 10c-8-3-18-1-18 4 0 6 15 3 14 8-1 4-10 4-16 1" fill="none" stroke="#fff" strokeWidth="5" />
    </svg>
    <div className="flex h-full flex-1 items-center justify-around">
      <svg width="20" height="20" fill="none" stroke="#1b72c8" strokeWidth="3"><path d="M2 5h16v8H2zM10 1v18" /></svg>
      <svg width="20" height="20" fill="none" stroke="#1b72c8"><circle cx="6" cy="6" r="2.500" strokeWidth="2" /><path d="M14 9c4 0 4 6-1 8 2-3 0-3-1-5 0-2 1-3 2-3z" fill="#1b72c8" /></svg>
      <svg width="20" height="20" fill="none" stroke="#1b72c8" strokeWidth="2"><circle cx="10" cy="10" r="9" /><path d="M5 11c1 6 9 6 10 0M7 5v4M13 5v4" /></svg>
      <svg width="20" height="20" fill="none" stroke="#1b72c8" strokeWidth="2"><rect x="7" y="1" width="6" height="10" rx="3" fill="#1b72c8" /><path d="M3 8c0 9 14 9 14 0M10 15v4M5 19h10" /></svg>
      <svg width="20" height="20" fill="#1b72c8"><rect x="0" y="3" width="20" height="15" rx="2" /><path d="M3 7h14M3 10.500h14" stroke="#fff" strokeWidth="2" strokeDasharray="2 1" /><path d="M5 14.500h10" stroke="#fff" strokeWidth="2" /></svg>
      <svg width="20" height="20" fill="#1b72c8"><circle cx="9" cy="5" r="4.500" /><path d="M1 19c0-7 3-9 8-9s6 1 7 9z" /><path d="M9 11h9v8H9z" fill="#fff" stroke="#1b72c8" /><path d="M11 14h5M11 16.500h5" stroke="#1b72c8" /></svg>
      <svg width="20" height="20" fill="#1b72c8"><path d="M6 2c2 2 6 2 8 0l6 4-3 5-2-1v9H5v-9l-2 1-3-5z" /></svg>
      <svg width="20" height="20" fill="#1b72c8"><path d="M1 2h8v8H1zM1 12h8v8H1zM11 12h8v8h-8z" /><path d="M12 3h6v6h-6z" fill="none" stroke="#1b72c8" strokeWidth="2" /></svg>
    </div>
  </div>
);

const Watermark = () => (
  <svg width="350" height="170" viewBox="0 0 350 170" className="pointer-events-none absolute right-[100px] bottom-9" fill="#fff" opacity="0.72">
    <mask id="paw">
      <rect width="350" height="170" fill="#fff" />
      <text x="143" y="99" fill="#000" className="font-['Roboto',sans-serif] text-[48px] font-bold">du</text>
    </mask>
    <text x="3" y="108" stroke="#fff" className="font-['Roboto',sans-serif] text-[79px] font-bold">Bai</text>
    <ellipse cx="135" cy="44" rx="13" ry="16" />
    <ellipse cx="159" cy="20" rx="12" ry="17" />
    <ellipse cx="190" cy="22" rx="13" ry="16" transform="rotate(10 190 22)" />
    <ellipse cx="209" cy="51" rx="13" ry="16" />
    <path
      mask="url(#paw)"
      d="M171 46c11 0 15 9 21 17 10 10 22 15 22 29 0 13-10 19-20 18-8-1-14-3-23-3s-13 3-23 3c-12 0-19-10-19-21s11-17 21-26c6-8 11-17 21-17z"
    />
    <text x="226" y="103" stroke="#fff" strokeWidth="2" className="font-['Noto_Sans_CJK_SC',sans-serif] text-[58px] font-black">经验</text>
    <text x="5" y="154" stroke="#fff" className="font-['Open_Sans',sans-serif] text-[40px]">jingyan.baidu.com</text>
  </svg>
);

const App = () => {
  const [command, setCommand] = useState("");

  return (
    <div className="relative flex h-screen flex-col overflow-hidden bg-[#686868] font-['Open_Sans','Noto_Sans_CJK_SC',sans-serif] text-[15px] text-black">
      <header className="flex h-[31px] shrink-0 items-center border-b border-b-[#333] bg-white">
        <button aria-label="application menu" className="z-10 flex h-[41px] w-[41px] shrink-0 items-center self-start border-2 border-black bg-linear-to-b from-[#d8d8d8] to-[#777] pl-[2px]">
          <svg width="24" height="28" viewBox="0 0 24 28">
            <path d="M10 1h4l10 22-5 4-3-6H8l-4 6-4-4z" fill="#b5200f" />
            <path d="M12 1l3 13-7 7-4 6-4-4L10 1z" fill="#e2432c" />
            <path d="M8 17l6-5 3 7z" fill="#5e0d06" />
          </svg>
          <svg width="8" height="5" className="mb-1 ml-[2px]"><path d="M0 0h8L4 5z" fill="#333" /></svg>
        </button>
        <h1 className="min-w-0 flex-1 text-center font-['Noto_Sans','Noto_Sans_CJK_SC',sans-serif] text-[15px] leading-6 whitespace-pre">
          T20天正电气软件 V6.0 For Autodesk AutoCAD 2014    Drawing1.dwg
        </h1>
        <div className="flex w-[272px] justify-end pr-[2px]">
          <button aria-label="minimize" className="flex w-[58px] justify-center"><svg width="12" height="12" stroke="#888"><path d="M0 6.500h12" /></svg></button>
          <button aria-label="restore" className="flex w-[58px] justify-center"><svg width="13" height="13" fill="none" stroke="#888"><path d="M.5 3.500h9v9h-9zM3.500 3V.5h9v9H10" /></svg></button>
          <button aria-label="close" className="flex w-[58px] justify-center"><svg width="12" height="12" stroke="#888"><path d="M0 0l12 12M12 0L0 12" /></svg></button>
        </div>
      </header>

      <nav className="flex h-[25px] shrink-0 items-center gap-7 bg-linear-to-b from-[#a2a2a2] to-[#555] pb-[2px] pl-14 font-['Noto_Sans','Noto_Sans_CJK_SC',sans-serif] text-white">
        {menus.map((m) => (
          <button key={m} className="leading-6">{m}</button>
        ))}
        <div className="ml-auto flex gap-[6px] pr-1">
          <button aria-label="minimize drawing"><svg width="11" height="11" stroke="#111" strokeWidth="2"><path d="M1 9h9" /></svg></button>
          <button aria-label="restore drawing"><svg width="11" height="11" fill="none" stroke="#111" strokeWidth="1.500"><path d="M1 4h6v6H1zM4 3V1h6v6H8" /></svg></button>
          <button aria-label="close drawing"><svg width="11" height="11" stroke="#111" strokeWidth="2"><path d="M1 1l9 9M10 1l-9 9" /></svg></button>
        </div>
      </nav>

      <div className="flex h-[33px] shrink-0 items-end border-b border-b-[#aaa] bg-linear-to-b from-[#a4a4a4] to-[#8d8d8d] pl-[18px]">
        <div className="relative flex h-[28px] w-[172px] items-center">
          <svg width="172" height="28" className="absolute inset-0">
            <defs>
              <linearGradient id="tab" x1="0" y1="0" x2="0" y2="1">
                <stop offset="0" stopColor="#e4e4e4" />
                <stop offset="1" stopColor="#b9b9b9" />
              </linearGradient>
            </defs>
            <path d="M0 28C12 26 10 1 20 1h132c10 0 8 25 20 27z" fill="url(#tab)" stroke="#eee" />
          </svg>
          <button className="relative ml-[22px] leading-6">Drawing1*</button>
          <button aria-label="close tab" className="relative mr-[25px] ml-auto">
            <svg width="9" height="9" stroke="#888" strokeWidth="2"><path d="M1 1l7 7M8 1L1 8" /></svg>
          </button>
        </div>
        <button aria-label="new tab" className="mb-[6px]">
          <svg width="28" height="18" viewBox="0 0 28 18" fill="#8a8a8a" stroke="#555" strokeWidth="1.500">
            <path d="M1 1h12c8 0 10 6 9 16H11C4 17 2 9 1 1z" />
            <path d="M10 5h3v3h3v3h-3v3h-3v-3H7V8h3z" fill="#aaa" strokeWidth="1" />
          </svg>
        </button>
      </div>

      <div className="flex shrink-0 flex-col gap-[3px] border-b border-b-[#999] pt-1 pb-[3px]">
        <div className="flex gap-px">
          <Toolbar>
            <ToolItems
              items={[
                "new", "open", "save", "|", "print", "preview", "publish", "cube3d", "|", "cut", "copyclip", "paste",
                "match", "blockedit", "|", "undo", ">", "redo", ">", "|", "pan", "zoomrt", "zoomwin", "zoomprev", "|",
                "props", "dcenter", "palette", "sheets", "markup", "calc", "|", "help",
              ]}
            />
          </Toolbar>
          <Toolbar>
            <ToolItems items={["textstyle"]} />
            <BarSelect label="文字样式" value={"TEL\u00a0\u00a0DIM"} width="w-[120px]" pad="pl-[25px]" />
            <Sep />
            <ToolItems items={["dimstyle"]} />
            <BarSelect label="标注样式" value="STANDARD" width="w-[120px]" pad="pl-[19px]" />
            <Sep />
            <ToolItems items={["tablestyle"]} />
            <BarSelect label="表格样式" value="Standard" width="w-[120px]" pad="pl-[4px]" />
            <Sep />
            <ToolItems items={["leaderstyle"]} />
            <BarSelect label="引线样式" value="Standard" width="w-[118px]" pad="pl-[18px]" />
          </Toolbar>
        </div>
        <div className="flex gap-px">
          <Toolbar>
            <BarSelect label="工作空间" value="AutoCAD 经典" width="w-[174px]" pad="pl-[9px]" />
            <ToolItems items={["gear", "wssave"]} />
          </Toolbar>
          <Toolbar>
            <ToolItems items={["layers"]} />
            <BarSelect
              label="图层"
              value="0"
              width="w-[298px]"
              pad="pl-[4px]"
              lead={
                <span className="flex shrink-0 items-center gap-[1px] pl-[2px]">
                  <Icon name="bulb" />
                  <Icon name="sun" />
                  <Icon name="vpfreeze" />
                  <Icon name="unlock" />
                  <span className="h-[10px] w-[10px] border border-black bg-white" />
                </span>
              }
            />
            <ToolItems items={["laymake", "layprev", "laystate"]} />
          </Toolbar>
          <Toolbar>
            <BarSelect
              label="颜色"
              value="ByLayer"
              width="w-[150px]"
              pad="pl-[3px]"
              mono
              lead={<span className="ml-[6px] h-[10px] w-[10px] shrink-0 border border-black bg-white" />}
            />
            <Sep />
            <BarSelect
              label="线型"
              value="ByLayer"
              width="w-[160px]"
              pad="pl-[4px]"
              mono
              lead={<span className="ml-[5px] h-px w-[60px] shrink-0 bg-black" />}
            />
            <Sep />
            <BarSelect
              label="线宽"
              value="ByLayer"
              width="w-[125px]"
              pad="pl-[4px]"
              mono
              lead={<span className="ml-[5px] h-px w-[35px] shrink-0 bg-black" />}
            />
            <Sep />
            <BarSelect label="打印样式" value="ByColor" width="w-[119px]" pad="pl-[9px]" mono />
          </Toolbar>
        </div>
      </div>

      <main className="flex min-h-0 flex-1">
        <Sidebar />
        <div className="flex min-w-0 flex-1 flex-col pl-1">
          <div className="flex min-h-0 flex-1">
            <div className="flex items-start gap-[3px]">
              <VToolbar items={[...drawTools, "addsel"]} />
              <VToolbar items={drawTools} />
            </div>
            <div className="ml-1 flex min-w-0 flex-1 flex-col items-start pb-[7px]">
              <div className="flex min-h-0 w-full flex-1 flex-col border-t-2 border-l-2 border-[#aaa]">
                <div className="flex min-h-0 flex-1">
                  <Canvas />
                  <VScroll />
                </div>
                <BottomScroll />
              </div>
              <div className="mt-1">
                <Toolbar>
                  <ToolItems
                    items={[
                      "panelset", "disk", "swap", "handask", "eraser2", "|", "lamp1", "lamp4", "swaplamp", "lampline",
                      "lamparc", "wall1", "wall2", "doublewall", "equip", "switch", "lampstick", "wire", "dashbox",
                      "wirepoint", "pencilred", "cutwire", "lampedit", "bars", "lamptable", "spark", "branches",
                      "busbar", "bulbpanel", "word", "book", "shapes", "outline", "crosspen", "layerpen", "layeroff",
                      "layeron", "lock", "lockopen", "box3d", "diamond",
                    ]}
                  />
                </Toolbar>
              </div>
            </div>
            <div className="flex items-start gap-[3px] pr-[3px] pl-1">
              <div className="flex flex-col">
                <VToolbar items={modifyTools} />
                <VToolbar items={["front", "back", "above", "under", "|", "abc", "hatchback"]} />
              </div>
              <VToolbar items={modifyTools2} />
            </div>
          </div>

          <div className="flex h-[54px] shrink-0 border-t border-t-gray-500">
            <div className="flex w-[29px] flex-col items-center overflow-hidden bg-linear-to-b from-[#8c8c8c] to-[#333]">
              <span className="mt-1 h-2 w-5 shrink-0 bg-[radial-gradient(#ccc_1px,transparent_1px)] bg-[size:4px_4px]" />
              <button aria-label="close command line" className="mt-[10px]">
                <svg width="11" height="10" stroke="#fff" strokeWidth="2.500"><path d="M1 1l9 8M10 1L1 9" /></svg>
              </button>
              <svg width="12" height="6" fill="none" stroke="#eee" strokeWidth="2" className="mt-auto"><path d="M2 5h2M7 1c3 0 3 2 3 5" /></svg>
            </div>
            <div className="flex flex-1 flex-col">
              <div className="h-[26px] border-b border-b-gray-500 bg-[#c8c8c8]" />
              <div className="flex flex-1 items-center bg-white pl-[6px]">
                <button aria-label="recent commands" className="flex items-center gap-[3px]">
                  <svg width="19" height="18" fill="none" stroke="#445">
                    <rect x="1" y="1" width="17" height="16" rx="2" fill="#e4e7eb" stroke="#b8bec6" strokeWidth="2" />
                    <path d="M4 5l4 4-4 4M10 13h5" strokeWidth="1.500" />
                  </svg>
                  <svg width="8" height="5"><path d="M0 0h8L4 5z" fill="#777" /></svg>
                </button>
                <input
                  aria-label="命令"
                  value={command}
                  onChange={(e) => setCommand(e.target.value)}
                  placeholder="键入命令"
                  className="ml-[10px] h-6 flex-1 text-[20px] leading-6 italic outline-none placeholder:text-[#999]"
                />
              </div>
            </div>
          </div>
        </div>
      </main>

      <StatusBar />
      <Watermark />
      <ImeBar />
    </div>
  );
};

export default App;
